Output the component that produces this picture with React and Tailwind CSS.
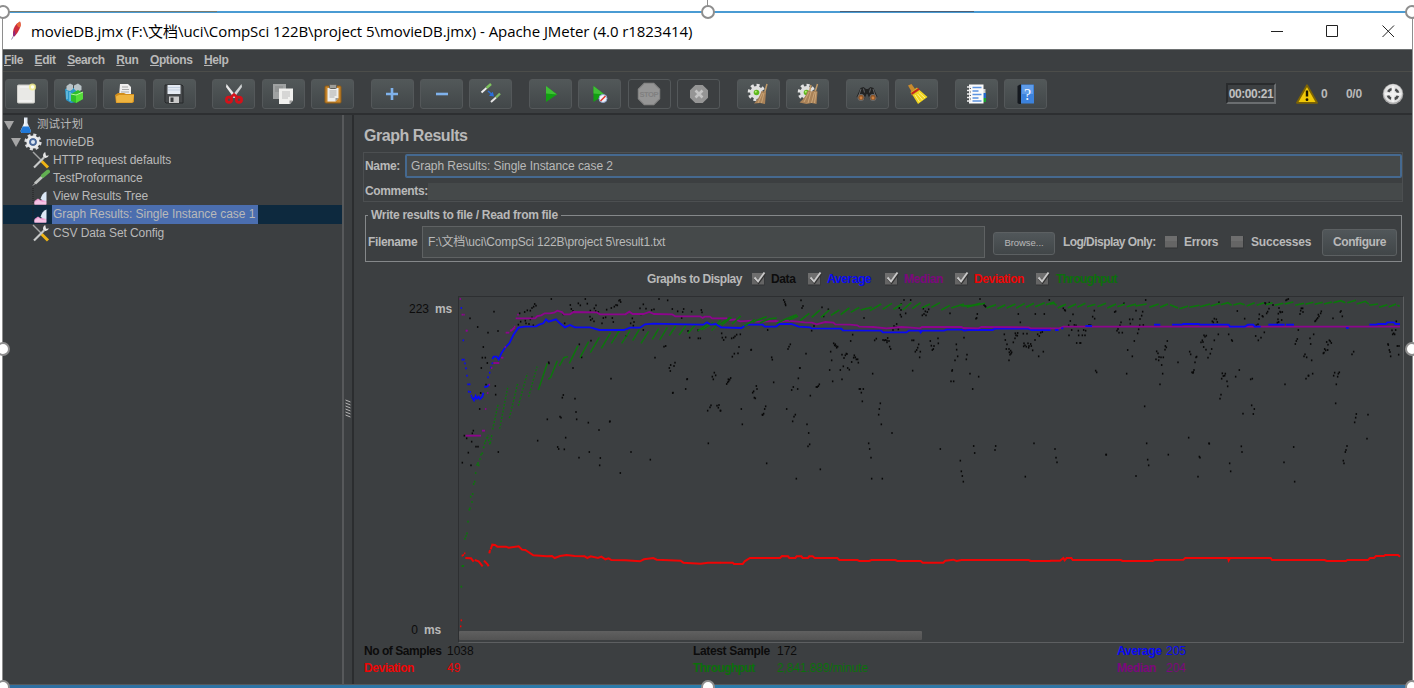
import React from "react";

/* ---------- icons ---------- */
const Svg = ({ children, s = 22 }) => (
  <svg width={s} height={s} viewBox="0 0 22 22" fill="none" className="shrink-0">
    {children}
  </svg>
);

const NewIcon = () => (
  <Svg>
    <rect x="2.500" y="2" width="17" height="18" rx="1" fill="#e9e9e6" stroke="#cfcfcb" />
    <path d="M5 4h10M4 18h13" stroke="#fafafa" />
    <circle cx="17.500" cy="4" r="3.600" fill="#f3ee8a" opacity=".8" />
    <circle cx="17.500" cy="4" r="1.700" fill="#fffff0" />
  </Svg>
);
const TemplatesIcon = () => (
  <Svg>
    <path d="M1 6l6-2 5 2v13l-5 1-5-3z" fill="#2b97c8" />
    <path d="M2.500 7l0-4 3.500-2.500 3 1.500 0 4-3 2zM10 6V2.500l4-2 3.500 2.500v4l-4 2z" fill="#b9c4c8" />
    <path d="M3 8v8M6 9v9" stroke="#8fd6ee" />
    <path d="M7 11l7-4 5 3v6l-7 4-5-2z" fill="#2fbf2a" />
    <path d="M12 12l7-3v7l-7 4z" fill="#55dd3a" />
    <path d="M7 11l5 1 7-3" stroke="#b4f59a" />
  </Svg>
);
const OpenIcon = () => (
  <Svg>
    <path d="M6 1h8l3 3v9H5z" fill="#eeeeee" />
    <path d="M8 4h6M8 6.500h7M7 9h8" stroke="#a9a9a9" />
    <path d="M1 12l3-2h6l2 1h8v8l-2 1H2z" fill="#d28e1c" />
    <path d="M2 13.500l3-1.500h15l-1.500 7.500H2.500z" fill="#eeb440" />
  </Svg>
);
const SaveIcon = () => (
  <Svg>
    <path d="M2 2h17l1 1v17H3l-1-1z" fill="#45484a" stroke="#26282a" />
    <rect x="4.500" y="2" width="13" height="9" fill="#e4eaf2" />
    <path d="M5 4.500h12M5 7h12" stroke="#c3d0e0" />
    <rect x="6" y="13.500" width="10" height="6.500" fill="#c9c9c9" />
    <rect x="7.500" y="14.500" width="3" height="4.500" fill="#3a3d3f" />
  </Svg>
);
const CutIcon = () => (
  <Svg>
    <path d="M3.500 1l10 12.500-2.500 1.500L3 4z" fill="#e9e9e9" />
    <path d="M18.500 1L8.500 13.500l2.500 1.500L19 4z" fill="#d0d3d4" />
    <circle cx="6" cy="16.800" r="2.600" stroke="#d3121a" strokeWidth="2.800" />
    <circle cx="16" cy="16.800" r="2.600" stroke="#d3121a" strokeWidth="2.800" />
    <path d="M7.500 14.500l3.500-3 3.500 3" stroke="#d3121a" strokeWidth="2.600" />
  </Svg>
);
const CopyIcon = () => (
  <Svg>
    <rect x="1" y="1" width="13" height="15" fill="#9fa2a2" />
    <path d="M3 4h8M3 6h8M3 8h5" stroke="#858888" />
    <path d="M7 5.500h14v12l-3 3.500H7z" fill="#f0f0ee" />
    <path d="M10 9h8M10 11h8M10 13h8M10 15h6" stroke="#bcbcbc" />
    <path d="M21 17.500h-3.500V21z" fill="#9a9a9a" />
  </Svg>
);
const PasteIcon = () => (
  <Svg>
    <rect x="3" y="3" width="16" height="17" rx="1" fill="#c8862b" stroke="#8f5c17" />
    <path d="M5.500 5h11v10l-3 3.500h-8z" fill="#eeeeec" />
    <path d="M7.500 8h7M7.500 10h7M7.500 12h7M7.500 14h5" stroke="#ababab" />
    <path d="M16.500 15h-3v3.500z" fill="#999" />
    <rect x="7.500" y="1.500" width="7" height="4" rx="1" fill="#9d9d98" stroke="#5f5f5b" />
  </Svg>
);
const PlusIcon = () => (
  <Svg>
    <path d="M11 5v12M5 11h12" stroke="#7fb2ec" strokeWidth="2.600" />
  </Svg>
);
const MinusIcon = () => (
  <Svg>
    <path d="M5 11h12" stroke="#7fb2ec" strokeWidth="2.600" />
  </Svg>
);
const ToggleIcon = () => (
  <Svg>
    <path d="M1.500 9.500L6.500 5" stroke="#eeeeee" strokeWidth="2" />
    <path d="M6.500 5L11 1" stroke="#7fc45f" strokeWidth="2.400" />
    <path d="M11 19l5-4.500" stroke="#e4e4e4" strokeWidth="2" />
    <path d="M16 14.500l4-4" stroke="#7fb765" strokeWidth="2.400" />
    <path d="M8 8l4 3.500" stroke="#2a6fd6" strokeWidth="1.600" />
    <path d="M14 13.500l-5-.8 3.800-3.900z" fill="#2a6fe0" />
  </Svg>
);
const StartIcon = () => (
  <Svg>
    <path d="M6 3l11 8.500L6 19z" fill="#12a012" />
    <path d="M6 3l11 8.500-11-1z" fill="#3fbf35" />
  </Svg>
);
const StartNoPauseIcon = () => (
  <Svg>
    <path d="M4.500 3l11 8.500-11 7.500z" fill="#12a012" />
    <path d="M4.500 3l11 8.500-11-1z" fill="#3fbf35" />
    <circle cx="14" cy="15.500" r="4" fill="#f2f4fa" stroke="#8fa5cf" />
    <path d="M11.500 18l5-5" stroke="#de3a2e" strokeWidth="1.600" />
  </Svg>
);
const StopIcon = () => (
  <Svg s={24}>
    <path d="M6.600 1.300h8.800l5.400 5.400v8.600l-5.400 5.400H6.600l-5.400-5.400V6.700z" fill="#959595" stroke="#868686" />
    <text x="10.800" y="13.700" textAnchor="middle" fontSize="7" fontWeight="bold" letterSpacing="-.5" fill="#808080" fontFamily="Liberation Sans, sans-serif">
      STOP
    </text>
  </Svg>
);
const ShutdownIcon = () => (
  <Svg>
    <path d="M7.300 2h7.400L20 7.300v7.400L14.700 20H7.300L2 14.700V7.300z" fill="#959595" />
    <path d="M7.500 7.500l7 7M14.500 7.500l-7 7" stroke="#c4c4c4" strokeWidth="2.600" />
  </Svg>
);
const Cog = () => (
  <>
    <circle cx="9.500" cy="9.500" r="7.300" stroke="#e3e3e3" strokeWidth="3" strokeDasharray="3 2.700" />
    <circle cx="9.500" cy="9.500" r="6.400" fill="#dedede" />
    <circle cx="9.500" cy="9.500" r="2.800" fill="#5fb81f" />
    <circle cx="8.800" cy="8.800" r="1" fill="#b8ee7a" />
  </>
);
const ClearIcon = () => (
  <Svg>
    <Cog />
    <path d="M20 1l-2.500 9" stroke="#c19a67" strokeWidth="1.500" />
    <path d="M14.500 8l4.500 1-1 12-5-1-6 .5q5-5 7.500-12.500z" fill="#a98258" />
    <path d="M15.500 10L11 20M17 10l-2.500 10" stroke="#d0ab7c" strokeWidth=".8" />
  </Svg>
);
const ClearAllIcon = () => (
  <Svg>
    <Cog />
    <path d="M14 2l-1.500 7M20.500 1L18 9" stroke="#c19a67" strokeWidth="1.500" />
    <path d="M10.500 7.500l4 1 3-1 3 1-1 12.500-5-1-5 1-7-1.500q6-5 8-11z" fill="#a98258" />
    <path d="M12 9L7 19M14 9l-3 11M17.500 9l-3 11M19 9l-1.500 11" stroke="#d4b083" strokeWidth=".8" />
  </Svg>
);
const FindIcon = () => (
  <Svg>
    <path d="M4.500 5l3-1 2.500 2h2l2.500-2 3 1 4 9-4 3-4-1-2-5h-1l-2 5-4 1-4-3z" fill="#222323" />
    <path d="M5 6l-2 6M17 6l2 6M7.500 5.500l1 4M14.500 5.500l-1 4" stroke="#606366" />
    <circle cx="5" cy="14.500" r="3.200" fill="#8e5528" stroke="#66696b" />
    <circle cx="17" cy="14.500" r="3.200" fill="#8e5528" stroke="#66696b" />
    <circle cx="5" cy="15" r="1.400" fill="#cc8242" />
    <circle cx="17" cy="15" r="1.400" fill="#cc8242" />
  </Svg>
);
const BroomIcon = () => (
  <Svg>
    <path d="M2 2.500L5.500 1l3.500 5-3.500 2.500z" fill="#c98b2d" />
    <path d="M4.500 9l6.500-4.500 2.500 2.700L6 12.500z" fill="#dfb021" />
    <path d="M6.500 12l7-5 8 7-9.500 7z" fill="#f0d51f" />
    <path d="M5.500 10.800l7.500-5" stroke="#c4281c" strokeWidth="2" />
    <path d="M9 12l4.500 7M11.500 11l5 6M13 9.500l6 5.500" stroke="#fff08a" />
  </Svg>
);
const FunctionIcon = () => (
  <Svg>
    <path d="M17 6h3.500v4H17z" fill="#cfcfcf" />
    <path d="M17 10h4v5h-4z" fill="#2468c8" />
    <path d="M17 15h4v4h-4z" fill="#18a030" />
    <rect x="4" y="1.500" width="14.500" height="19" fill="#fbfbfb" />
    <path d="M7.500 4.500h9M7.500 8h6M7.500 11.500h9M7.500 15h6M7.500 18h9" stroke="#5b93e0" strokeWidth="1.700" />
    <path d="M2 4h4M2 7.500h4M2 11h4M2 14.500h4M2 18h4" stroke="#ececec" strokeWidth="1.400" />
    <path d="M4.800 5.500h1M4.800 9h1M4.800 12.500h1M4.800 16h1" stroke="#444" />
  </Svg>
);
const HelpIcon = () => (
  <Svg>
    <path d="M2.500 3L5 1.500h1V21H4l-1.500-1z" fill="#15191f" />
    <rect x="6" y="1.500" width="13" height="19" rx=".6" fill="#3c82dc" />
    <rect x="7" y="2" width="11" height="9" fill="#5f9ce8" />
    <text x="12.600" y="16.600" textAnchor="middle" fontSize="16" fill="#f3f8ff" fontFamily="Liberation Serif, serif">
      ?
    </text>
  </Svg>
);
const WarningIcon = () => (
  <svg width="22" height="20" viewBox="0 0 22 20">
    <path d="M11 1.200L21 18.800H1z" fill="#f0c808" stroke="#7d6404" strokeWidth="1.800" strokeLinejoin="round" />
    <path d="M11 6.500v6" stroke="#1b1600" strokeWidth="2.400" />
    <circle cx="11" cy="15.700" r="1.400" fill="#1b1600" />
  </svg>
);
const StatusIcon = () => (
  <svg width="22" height="22" viewBox="0 0 22 22" fill="none">
    <circle cx="11" cy="11" r="10.300" fill="#a9a9a9" />
    <circle cx="11" cy="10.500" r="9.200" fill="#e2e2e2" />
    <circle cx="11" cy="11" r="5.200" stroke="#4a4c4d" strokeWidth="2.600" strokeDasharray="4.600 3.560" strokeDashoffset="-1.800" />
    <path d="M11 3v16M3 11h16" stroke="#f2f2f2" strokeWidth="2.600" />
  </svg>
);
const FeatherIcon = () => (
  <svg width="14" height="22" viewBox="0 0 14 22">
    <path d="M3 15.500Q2.500 8 6.500 4L10 1.500q1.500 3-.5 7.500-2 4.500-5 7.500z" fill="#cc2c3c" />
    <path d="M6.500 4L10 1.500q1.500 3 .1 6Q8 8 6.500 4z" fill="#e8683a" />
    <path d="M3 15.500q0-3.500 1.500-5.500l1 4.500-1.500 2z" fill="#8c2a86" />
    <path d="M1.500 19.500l2-3.500" stroke="#8f80ac" strokeWidth=".9" />
  </svg>
);
const FlaskIcon = () => (
  <svg width="12" height="18" viewBox="0 0 12 18">
    <path d="M4 1.500h3.500V7l3.500 8-1 2H1.500l-1-2L4 7z" fill="#dfe8f2" />
    <path d="M2.700 10.500h6.200l2.100 4.500-1 2H1.500l-1-2z" fill="#1f78d8" />
    <path d="M4.800 3v7" stroke="#fff" />
  </svg>
);
const GearIcon = () => (
  <svg width="18" height="18" viewBox="0 0 18 18" fill="none">
    <circle cx="9" cy="9" r="7" stroke="#dcdde0" strokeWidth="3.200" strokeDasharray="2.900 2.600" />
    <circle cx="9" cy="9" r="5" stroke="#e9eaec" strokeWidth="3.200" />
    <circle cx="9" cy="9" r="3.800" fill="#47679c" />
    <circle cx="9" cy="9" r="2" fill="#dbe6f4" />
  </svg>
);
const ToolsIcon = () => (
  <svg width="18" height="18" viewBox="0 0 18 18" fill="none">
    <path d="M1 1l8 8" stroke="#a4a6a6" strokeWidth="1.500" />
    <path d="M9.500 10l6.500 6.500" stroke="#eeb414" strokeWidth="3" />
    <path d="M2 16.500l10-10" stroke="#c7c9c9" strokeWidth="2.200" />
    <path d="M13.200 1Q10 3 11.500 6.500q3.500 1.500 5.500-2l-3 .2z" fill="#e6e6e6" />
  </svg>
);
const PipetteIcon = () => (
  <svg width="18" height="18" viewBox="0 0 18 18" fill="none">
    <path d="M1 16.500l3-3" stroke="#cdcdcd" strokeWidth="1" />
    <path d="M3 14.500L11 7" stroke="#c2c5c3" strokeWidth="2.800" />
    <path d="M11 6.800L16 2.500" stroke="#62b052" strokeWidth="4" strokeLinecap="round" />
  </svg>
);
const ChartIcon = () => (
  <svg width="18" height="18" viewBox="0 0 18 18" fill="none">
    <path d="M1 1v16" stroke="#222" strokeDasharray="1 1" />
    <path d="M2.500 17.500V14l3.500-2.500 3 2L14 9v8.500z" fill="#ee9bd0" />
    <path d="M8.500 12q1.500-6 6-7.500V14q-3 0-6-2z" fill="#dce8f6" />
    <path d="M2.500 15l4-2 4 2 4-1v3.500h-12z" fill="#f5c3e4" />
  </svg>
);

/* ---------- toolbar ---------- */
const toolbarGroups = [
  [NewIcon, TemplatesIcon, OpenIcon, SaveIcon],
  [CutIcon, CopyIcon, PasteIcon],
  [PlusIcon, MinusIcon, ToggleIcon],
  [StartIcon, StartNoPauseIcon, StopIcon, ShutdownIcon],
  [ClearIcon, ClearAllIcon],
  [FindIcon, BroomIcon],
  [FunctionIcon, HelpIcon],
];
const disabledIcons = [StopIcon, ShutdownIcon];

const Toolbar = () => (
  <div className="flex h-[40px] items-center pt-[1px] pr-[8px] pl-[1.500px]">
    <div className="flex gap-[16.600px]">
      {toolbarGroups.map((group, i) => (
        <div key={i} className="flex gap-[6.400px]">
          {group.map((Icon, j) => (
            <button
              key={j}
              className={
                "flex h-[30px] w-[43px] items-center justify-center rounded-[3px] border border-[#54585a] " +
                (disabledIcons.includes(Icon) ? "bg-[#3c3f41]" : "bg-linear-to-b from-[#525859] to-[#424749]")
              }
            >
              <Icon />
            </button>
          ))}
        </div>
      ))}
    </div>
    <div className="ml-auto flex items-center">
      <span className="flex h-[21px] w-[50px] items-center justify-center border-2 border-t-[#292b2d] border-r-[#6b6e70] border-b-[#6b6e70] border-l-[#292b2d] text-[12px] font-bold tracking-[-0.450px] text-[#c0c0c0]">
        00:00:21
      </span>
      <span className="ml-[20px] flex">
        <WarningIcon />
      </span>
      <span className="ml-[3px] w-[7px] text-[12px] font-bold">0</span>
      <span className="ml-[18px] w-[18px] text-[12px] font-bold tracking-[-0.300px]">0/0</span>
      <span className="ml-[18px] flex">
        <StatusIcon />
      </span>
    </div>
  </div>
);

/* ---------- tree ---------- */
const treeItems = [
  { label: "HTTP request defaults", icon: ToolsIcon },
  { label: "TestProformance", icon: PipetteIcon },
  { label: "View Results Tree", icon: ChartIcon },
  { label: "Graph Results: Single Instance case 1", icon: ChartIcon, selected: true },
  { label: "CSV Data Set Config", icon: ToolsIcon },
];
const Arrow = () => (
  <svg width="10" height="9" viewBox="0 0 10 9">
    <path d="M0 0h10L5 9z" fill="#a6a6a6" />
  </svg>
);

const Tree = () => (
  <div className="w-[341px] border-r-2 border-r-[#57595b] text-[12px] tracking-[-0.080px]">
    <div className="flex h-[18px] items-center pt-[2px] pl-[1px]">
      <Arrow />
      <span className="ml-[6px]">
        <FlaskIcon />
      </span>
      <span className="ml-[5px] text-[11.500px] tracking-normal">测试计划</span>
    </div>
    <div className="flex h-[18px] items-center pl-[8px]">
      <Arrow />
      <span className="ml-[3px]">
        <GearIcon />
      </span>
      <span className="ml-[4px]">movieDB</span>
    </div>
    {treeItems.map(({ label, icon: Icon, selected }) => (
      <div key={label} className={"flex h-[18.150px] items-center pl-[29px] " + (selected ? "bg-[#0d293e]" : "")}>
        <Icon />
        <span className={"ml-[2px] flex h-full items-center pl-[1px] whitespace-nowrap " + (selected ? "w-[206px] bg-[#4b6eaf] tracking-[-0.050px]" : "")}>
          {label}
        </span>
      </div>
    ))}
  </div>
);

/* ---------- controls ---------- */
const Check = ({ on }) => (
  <svg width="17" height="16" viewBox="0 0 17 16" fill="none" className="shrink-0">
    <rect x="1" y="2" width="12.500" height="12.500" fill="#303234" />
    <rect x="1" y="2" width="12" height="11.500" fill="#656565" />
    <rect x="1" y="2" width="12" height="5" fill="#6e6e6e" />
    {on && (
      <>
        <path d="M4 7.500l3.500 4L14 2.500" stroke="#333" strokeWidth="2.600" />
        <path d="M3.500 6.500l3.500 4L13.500 1.500" stroke="#c8c8c8" strokeWidth="1.900" />
      </>
    )}
  </svg>
);

/* ---------- chart data, stored at three units per pixel ---------- */
const parse = (s) => s.trim().split(/\s+/).map((p) => p.split(",").map(Number));

const dotsA = parse(`454,27 556,27 777,27 803,31 404,42 408,47 401,50 396,54 391,62 374,66 382,61 282,65 210,85 233,111 264,128 294,123 250,171 247,203 256,203 244,234 262,219 258,284 286,288 242,309 239,357 287,314 193,437 220,422 217,430 200,445 215,455 228,470 234,470 205,488 187,518 213,526 295,486
511,45 535,40 541,46 514,57 519,63 562,41 571,62 583,55 588,46 587,63 595,66 620,59 634,54 643,50 648,45 652,46 657,32 662,36 660,30 730,43 720,55 723,73 738,56 755,60 762,58 817,57 833,64 851,57 848,66 845,84 875,65 904,60 906,67 490,73 355,104 362,95 376,92 378,100 387,102 391,88 396,82 400,106 359,70 494,100 570,80 572,90 577,86 582,94 606,100 610,84 617,82 637,84 640,96 692,100 697,85 702,96 700,107 679,138 730,120
765,203 792,170 797,168 825,218 822,228 812,225 808,234 811,243 861,268 862,267 857,297 818,309 819,308 633,266 519,234 446,217 447,220 538,163 545,202 573,152 490,315 487,323 525,326 528,366 530,388 442,388 480,380 483,383 413,452 497,443 565,398 597,420 629,395 630,394 473,471 476,477 493,478 568,486 537,503 601,504 599,526 661,549 693,486 751,509 925,460 943,248 947,256 937,260 940,268 933,346 930,352 923,362 951,347 957,345 955,353 962,362 894,121 895,145 901,145 869,143 864,123`);

const dotsB = parse(`191,30 194,36 196,42 197,46 243,31 249,48 246,54 306,52 325,58 311,79 432,84 544,42 552,30 572,30 538,54 543,60 541,74 557,70 544,80 610,56 616,64 622,66 612,72 618,76 607,76 626,58 690,70 780,27 795,48 797,50 792,45 772,72 768,86 770,84 895,72 901,97 946,72 973,72 988,30 530,102 528,112 519,120 522,108 535,118 282,108 275,122 143,120
7,143 11,150 17,142 5,130 35,145 41,143 45,139 50,134 61,133 57,171 54,190 43,191 37,200 93,180 94,179 211,163 207,170 204,177 155,202 157,209 258,191 239,234 240,234 235,265 233,297 220,291 215,300 271,317 298,283 295,288 292,291 289,291 332,185 335,211 329,240 338,274 341,160 344,166 348,168 350,173 346,163 353,170 392,153 398,134 366,194 379,191 376,196 372,204 381,192 403,196 406,202 401,203 409,208 395,216 415,218 413,208 370,229 361,240 383,234 388,239 366,268 458,251
418,297 421,297 430,297 424,308 427,334 481,340 478,357 476,374 484,403 516,429 446,460 449,477 453,503 455,566 487,566 464,151 469,146 489,150 493,151 497,150 501,152 503,144 507,153 501,157 509,170 512,177 576,151 581,151 596,163 593,173 590,180 586,185 601,185 599,202 578,242 631,153 634,167 642,168 640,177 637,180 654,145 655,160 732,143 709,163 710,179 713,199 705,211 741,194 739,208 697,240 696,243 693,274 701,274 750,251 776,260 758,297
661,477 761,468 764,489 721,512 724,544 727,558 730,575 827,468 825,480 942,460 916,560 853,133 856,150 861,163 859,177 867,177 872,182 868,187 873,191 875,187 870,194 867,211 880,157 885,145 888,136 893,129 886,130 892,137 910,131 921,131 912,160 915,166 919,170 924,160 927,168 932,162 934,168 926,173 938,181 911,169 953,133 958,138 962,128 967,126 945,150 970,185 956,199
25,268 32,264 29,269 26,274 23,277 20,282 109,288 111,297 101,304 98,308 103,323 106,325 161,277 137,349 134,357 131,371 127,374 128,375 64,357 67,403 1,362 200,357 226,374 222,380 218,394 261,403 266,429 269,463 264,469 140,520 301,538 229,566`);

const dotsC = parse(`40,55 44,60 46,62 69,73 61,93 56,106 73,105 78,106 65,120 57,136 85,122 101,120 107,122 97,136 105,136 86,136 80,159 90,159 92,159 133,62 128,80 134,86 117,105 122,106 197,64 194,66 222,40 221,42 287,30 278,65 275,77 270,87 280,105 269,106 266,118 263,130 253,153 258,62 248,88 239,88 241,101 213,97 210,106 204,117 201,122 207,128 217,128 233,180 247,199 230,251 137,242 140,247
352,153 346,168 349,172 345,179 320,184 324,190 327,201 333,202 340,202 318,208 326,211 335,225 338,251 330,283 384,217 419,185 422,193 440,200 438,202 435,217 432,240 426,247 429,249 430,246 457,151 462,136 465,140 469,137 459,156 453,157 461,171 468,179 485,177 481,191 474,203 493,151 505,133 507,37 499,88 493,86 487,94 490,97 502,96 536,133 545,150 547,153 568,240 557,260 517,250 526,251 524,257 520,258 515,266 531,274 533,289 602,268 607,266 513,314 510,326 605,346 613,357 579,371 610,372
584,86 562,63 645,39 647,41 669,45 658,38 657,56 653,65 650,70 637,78 639,80 628,73 627,87 624,103 619,106 643,127 633,143 625,151 617,138 715,27 711,29 708,31 687,54 690,65 692,67 697,66 685,71 684,88 695,90 686,96 682,98 754,55 758,55 752,62 759,66 750,72 814,64 812,70 805,74 807,79 803,84 800,88 797,92 795,94 873,63 871,66 877,79 849,85 745,120 742,147 739,153 736,162 780,145 791,133 782,162 765,193 762,199 770,202 785,211 775,257 776,257 788,251 768,266 705,283 838,151 841,154 830,156 844,159 834,164 824,177 827,181 833,180 822,188 820,190 911,185 906,193 854,248 868,247 865,251 851,257 863,260 859,283 857,340
1026,121 1037,120 1031,130 1034,133 1028,133 1014,162 1015,165 1047,168 1042,168 1018,180 1020,186 1046,194 1022,199 1039,94 284,349 416,443 290,460 293,509 296,526 258,558 355,494 168,494 169,494 477,460 478,461 448,500 450,503 444,560 574,469 576,486 539,520 542,544 731,471 702,517 734,575 891,468 888,480 886,486 880,512 882,520 919,372 917,383 914,397 954,374 951,446 15,477 18,503 21,517`);

const greenDots = parse(`184,890 187,828 190,828 195,746 198,738 201,730 204,695 208,659 210,655 212,620 216,636 218,612 221,582 224,575 227,549 231,524 234,519 236,526 240,507 243,494 247,490 251,472 254,460`);
const greenDashed = ["256,455 265,434", "262,440 271,466", "271,460 276,432", "278,418 295,340", "299,416 324,288", "328,384 353,281", "355,347 382,250", "386,320 411,230"];
const greenA = ["415,300 442,220", "445,268 452,262 472,212", "478,228 492,203 504,200", "508,220 534,167", "540,203 566,155", "571,188 598,142", "604,175 632,128", "634,160 658,122", "665,160 690,122", "698,152 718,118", "723,160 746,124", "757,148 776,116", "779,150 802,112", "808,137 827,108", "837,135 858,106", "864,130 888,102", "893,123 920,104", "905,120 940,98", "935,122 962,90", "950,108 990,82"];
const greenB = ["5,105 34,82", "36,102 62,78", "73,108 104,88", "98,96 140,80", "120,98 150,86 170,84", "170,100 196,88 230,74", "206,90 234,78", "240,92 268,70", "275,82 300,60", "303,82 328,60", "333,76 358,60", "362,74 388,54", "392,67 418,52", "422,60 455,52", "450,62 484,42", "488,58 516,40", "520,58 546,42", "548,60 574,38", "577,56 602,38", "605,54 630,42", "634,52 660,38", "664,60 690,46", "694,54 732,42", "724,48 764,46", "740,52 780,40", "766,46 795,40", "800,54 828,44", "832,56 856,44", "860,54 886,42", "889,54 914,40", "918,52 942,40", "946,50 974,38", "978,44 1003,36"];
const greenC = ["0,43 12,40 20,46", "23,54 48,43", "53,54 78,42", "82,52 106,40", "111,50 136,43", "142,50 168,40", "172,54 198,42", "202,50 225,42", "230,50 258,42", "256,48 290,42", "298,52 326,42", "330,52 354,42", "360,44 384,54", "388,56 408,50 414,48", "418,52 448,46", "450,50 480,42", "482,48 510,40", "512,44 534,38 545,46", "550,45 570,40 584,44", "590,48 614,38", "620,46 642,38", "648,44 668,38", "674,46 700,40", "704,42 730,36", "736,46 762,40", "766,43 790,37", "794,43 818,37", "822,42 846,36", "850,38 872,32 886,38", "892,38 918,31", "920,42 946,34 956,42", "958,46 984,42", "987,52 1012,44", "1016,51 1038,42", "1042,46 1049,49"];

const blueDots = parse(`184,54 190,151 187,209 192,209 195,220 198,235 201,257 204,283 209,283 206,305 211,306 214,317 264,262 269,248 273,232 277,220`);
const blueA = ["215,320 222,331 227,318 231,326 236,320 240,327 247,320 250,308", "253,291 262,289 267,284", "277,207 281,200 290,200 296,208 304,190 316,172 328,160 340,135 355,113 373,110 408,109 417,104 430,100 438,88 446,95 468,88 480,100 495,112 510,105 525,112 570,112 598,120 672,120 690,113 720,113 735,103 760,101 858,103 910,104 921,97 932,104 947,102 960,110 962,111"];
const blueB = ["0,112 64,114 80,104 128,104 134,110 168,110 178,102 214,102 236,110 270,112 274,115 364,116 368,121 484,122 488,127 560,127 566,122 600,122 602,127 606,122 672,122 680,119 726,119 732,122 746,120 818,120 824,116 926,116 934,120 992,120", "1006,120 1016,120"];
const blueC = ["15,120 24,120", "34,115 40,115", "106,108 126,108", "312,104 331,104", "366,104 396,104 400,102 446,102 450,104 536,104 540,110 584,110 594,104 610,104 614,110 632,110", "655,104 704,104", "708,104 732,104", "888,114 896,114", "958,104 980,104 984,102 1008,102 1012,97 1032,97 1036,102 1050,102"];

const purpleDots = parse(`181,27 187,74 192,74 199,122 201,122 257,357 263,309 268,284 275,234 284,219 294,219 308,203 305,203 316,171 344,110 354,74 333,122`);
const purpleA = ["197,437 243,437", "246,422 255,422", "280,219 298,219", "317,128 328,128", "331,122 336,120 344,112", "347,85 405,85 412,78 424,76 434,70 450,70 462,68 472,62 486,66 492,73 510,73 520,66 590,67 600,73 676,73 688,65 698,72 730,72 748,66 762,72 816,73 826,79 900,79 908,84 914,80 930,80 936,85 960,85"];
const purpleB = ["0,85 22,85", "28,90 46,88 60,94 96,92 108,95 168,93 178,96 196,92 232,95 254,97 276,98 290,103 316,96 340,98 346,103 390,104 412,106 418,110 460,111 500,115 544,111 566,112 600,115 606,111 724,111 730,114 776,115 784,111 926,112 932,115 992,115"];
const purpleC = ["0,115 28,115 40,110 1050,110"];

const redDots = parse(`187,797 190,795 194,790 184,991 182,1009`);
const redA = ["196,804 213,805 221,815", "224,810 236,814 248,829", "252,812 262,822 266,829", "268,790 270,780", "272,778 277,764 285,765 292,770 318,770 326,773 356,769 366,779 376,780 400,796 440,799 456,798 464,804 480,798 500,795 524,798 554,799 562,804 572,799 594,804 604,800 616,808 626,805 634,810 676,811 720,814 732,808 760,804 770,809 790,810 842,812 850,818 902,821 924,818 962,818"];
const redB = ["0,818 38,818 42,822 68,822 74,814 90,804 180,804 186,798 204,799 208,804 226,804 230,799 244,799 248,804 264,804 268,799 278,799 284,804 352,804 358,810 412,810 418,813 448,813 454,810 526,810 532,813 602,813 608,818 670,818 676,812 700,809 710,813 724,810 926,810 932,813 992,813"];
const redC = ["0,812 30,812 40,804 44,811 50,804 64,804 68,810 212,810 218,813 308,813 314,810 400,809 406,804 534,804 536,811 540,804 662,804 666,810 824,810 830,813 888,813 892,810 954,810 960,804 972,804 978,798 1002,798 1006,795 1044,795 1050,800"];

const Dots = ({ pts, color, size = 4.4 }) =>
  pts.map(([x, y], i) => <rect key={i} x={x - size / 2} y={y - size / 2 - 0.5} width={size} height={size + 1} fill={color} />);
const Lines = ({ segs, color, w = 5.5, dash }) =>
  segs.map((s, i) => <polyline key={i} points={s} fill="none" stroke={color} strokeWidth={w} strokeDasharray={dash} />);

const BLUE = "#0a0af5";
const PURPLE = "#8d058d";
const GREEN = "#0b780b";
const RED = "#ee0505";

const Chart = () => (
  <svg width="944" height="334" viewBox="459 297 944 334" className="block">
    <g transform="translate(400 290) scale(.33333)">
      <Dots pts={dotsA} color="#080808" />
      <Lines segs={greenDashed} color={GREEN} w={4} dash="5 5" />
      <Lines segs={greenA} color={GREEN} w={4.2} />
      <Dots pts={greenDots} color={GREEN} />
      <Lines segs={blueA} color={BLUE} />
      <Dots pts={blueDots} color={BLUE} />
      <Lines segs={purpleA} color={PURPLE} />
      <Dots pts={purpleDots} color={PURPLE} />
      <Lines segs={redA} color={RED} w={6} />
      <Dots pts={redDots} color={RED} />
    </g>
    <g transform="translate(720 290) scale(.33333)">
      <Dots pts={dotsB} color="#080808" />
      <Lines segs={blueB} color={BLUE} />
      <Lines segs={purpleB} color={PURPLE} />
      <Lines segs={greenB} color={GREEN} w={4.8} />
      <Lines segs={redB} color={RED} w={6} />
    </g>
    <g transform="translate(1050 290) scale(.33333)">
      <Dots pts={dotsC} color="#080808" />
      <Lines segs={purpleC} color={PURPLE} />
      <Lines segs={blueC} color={BLUE} />
      <Lines segs={greenC} color={GREEN} w={4.8} />
      <Lines segs={redC} color={RED} w={6} />
    </g>
  </svg>
);

/* ---------- result panel ---------- */
const GraphPanel = () => (
  <div className="flex w-[1059px] flex-col border-l-2 border-l-[#2b2d2f] pl-[10px] text-[12px]">
    <h1 className="mt-[11px] h-[20px] text-[16px] leading-[20px] font-bold tracking-[-0.450px]">Graph Results</h1>

    <div className="mt-[6px] -ml-[1px] h-[50px] w-[1040px] border border-[#4c4f51] pl-[1px]">
      <div className="mt-px flex h-[23px] items-center">
        <b className="w-[40px] tracking-[-0.350px]">Name:</b>
        <div className="flex h-[24px] flex-1 items-center rounded-[2px] border-2 border-[#456990] bg-[#45494a] pl-[4px] tracking-[-0.060px]">
          Graph Results: Single Instance case 2
        </div>
      </div>
      <div className="mt-[5px] flex h-[18px] items-center">
        <b className="w-[63px] tracking-[-0.350px]">Comments:</b>
        <div className="h-[17px] flex-1 bg-[#45494a]" />
      </div>
    </div>

    <fieldset className="mt-[5px] ml-[1px] h-[55px] w-[1037px] border-[1.500px] border-[#85888a]">
      <legend className="ml-[2px] h-[16px] px-[3px] leading-[16px] font-bold tracking-[-0.290px] whitespace-nowrap">Write results to file / Read from file</legend>
      <div className="flex h-[38px] items-center pl-[2px]">
        <b className="w-[54px] tracking-[-0.350px]">Filename</b>
        <div className="flex h-[32px] w-[563px] items-center border border-[#5f6263] bg-[#45494a] pl-[5px] tracking-[-0.170px]">
          F:\文档\uci\CompSci 122B\project 5\result1.txt
        </div>
        <button className="mt-[2px] ml-[8px] flex h-[23px] w-[62px] items-center justify-center rounded-[3px] border border-[#5c6062] bg-linear-to-b from-[#51575a] to-[#414648] text-[9.500px] tracking-[-0.050px]">
          Browse...
        </button>
        <b className="ml-[8px] w-[101px] tracking-[-0.550px] whitespace-nowrap">Log/Display Only:</b>
        <Check />
        <b className="ml-[3px] w-[46px] tracking-[-0.300px]">Errors</b>
        <Check />
        <b className="ml-[4px] w-[71px] tracking-[-0.200px]">Successes</b>
        <button className="flex h-[27px] w-[75px] items-center justify-center rounded-[3px] border border-[#5c6062] bg-linear-to-b from-[#51575a] to-[#414648] font-bold tracking-[-0.400px]">
          Configure
        </button>
      </div>
    </fieldset>

    <div className="mt-[8px] flex h-[18px] items-center pl-[283px] font-bold tracking-[-0.400px]">
      <span className="w-[104px] tracking-[-0.450px]">Graphs to Display</span>
      <Check on />
      <span className="ml-[3px] w-[36px] text-[#0c0c0c]">Data</span>
      <Check on />
      <span className="ml-[3px] w-[57px] text-[#0a0af5]">Average</span>
      <Check on />
      <span className="ml-[3px] w-[50px] text-[#7d087d]">Median</span>
      <Check on />
      <span className="ml-[3px] w-[61px] tracking-[-0.450px] text-[#ee0505]">Deviation</span>
      <Check on />
      <span className="ml-[4px] tracking-[-0.650px] text-[#0b700b]">Throughput</span>
    </div>

    <div className="mt-[8px] flex h-[347px]">
      <div className="flex w-[94px] flex-col justify-between pt-[5px] pb-[5px] font-bold">
        <div className="flex justify-end gap-[6px] pr-[6px] leading-[16px] tracking-[-0.200px]">
          <span className="font-normal tracking-normal text-[#0c0c0c]">223</span>ms
        </div>
        <div className="flex justify-end gap-[6px] pr-[17px] leading-[16px] tracking-[-0.200px]">
          <span className="font-normal tracking-normal text-[#0c0c0c]">0</span>ms
        </div>
      </div>
      <div className="w-[946px] border border-t-[#2d2f31] border-r-[#5d5f61] border-b-[#5d5f61] border-l-[#2d2f31]">
        <Chart />
        <div className="h-[9px] w-[463px] rounded-[1px] bg-linear-to-b from-[#606060] to-[#535353]" />
      </div>
    </div>

    <div className="grid grid-cols-[83px_246px_84px_340px_49px_60px] leading-[17px] whitespace-nowrap">
      <b className="tracking-[-0.450px] text-[#0c0c0c]">No of Samples</b>
      <span className="text-[#0c0c0c]">1038</span>
      <b className="tracking-[-0.350px] text-[#0c0c0c]">Latest Sample</b>
      <span className="text-[#0c0c0c]">172</span>
      <b className="tracking-[-0.350px] text-[#0a0af5]">Average</b>
      <span className="text-[#0a0af5]">205</span>
      <b className="tracking-[-0.450px] text-[#ee0505]">Deviation</b>
      <span className="text-[#ee0505]">49</span>
      <b className="tracking-[-0.550px] text-[#0b700b]">Throughput</b>
      <span className="tracking-[-0.100px] text-[#0b700b]">2,841.889/minute</span>
      <b className="tracking-[-0.400px] text-[#7d087d]">Median</b>
      <span className="text-[#7d087d]">204</span>
    </div>
  </div>
);

const menus = ["File", "Edit", "Search", "Run", "Options", "Help"];

const Handle = ({ at }) => <i className={"absolute size-[14px] rounded-full border-[2.500px] border-[#8e8e8e] bg-white " + at} />;

export default function App() {
  return (
    <div className="relative flex h-[688px] w-[1414px] flex-col overflow-hidden bg-white pt-[11px] font-['Liberation_Sans','Noto_Sans_CJK_SC',sans-serif] text-[#b9b9b9]">
      <div className="flex h-[2px] bg-[#4a9bd3]">
        <div className="ml-[4px] h-[1px] w-[213px] bg-[#777b70]" />
        <div className="ml-[623px] h-[1px] w-[134px] bg-[#4a6078]" />
      </div>
      <div className="mr-[1px] ml-[2px] flex h-[675px] flex-col border-x border-[#8e8e8e]">
        <header className="flex h-[36px] shrink-0 items-center bg-white pl-[7px] font-['Open_Sans','Noto_Sans_CJK_SC',sans-serif] text-[15px] whitespace-nowrap text-black">
          <FeatherIcon />
          <span className="ml-[7px] tracking-[-0.065px]">
            movieDB.jmx (F:\文档\uci\CompSci 122B\project 5\movieDB.jmx) - Apache JMeter (4.0 r1823414)
          </span>
          <svg width="126" height="16" viewBox="0 0 126 16" fill="none" stroke="#222" className="mr-[17px] mb-[1px] ml-auto">
            <path d="M2 8.500h12M57.500 2.500h11v11h-11zM113.500 2.500l11.500 11.500M125 2.500L113.500 14" />
          </svg>
        </header>
        <div className="flex flex-1 flex-col border-t border-t-[#6e7172] bg-[#3c3f41]">
          <nav className="flex h-[22px] items-center gap-[11.600px] border-b border-b-[#4c4d4a] pb-[2px] pl-[1px] text-[12px] font-bold">
            {menus.map((m) => (
              <span key={m} className="tracking-[-0.420px]">
                <u className="underline-offset-[1px]">{m[0]}</u>
                {m.slice(1)}
              </span>
            ))}
          </nav>
          <div className="h-[1px]" />
          <Toolbar />
          <div className="h-[2px] bg-[#2d2f31]" />
          <div className="flex h-[569px]">
            <Tree />
            <div className="flex w-[8px] items-center justify-center pt-[18px]">
              <svg width="6" height="20" viewBox="0 0 6 20" stroke="#b4b4b4" fill="none">
                <path d="M0 3l5 2M0 6l5 2M0 9l5 2M0 12l5 2M0 15l5 2M0 18l5 2" transform="translate(.5 -2)" />
              </svg>
            </div>
            <GraphPanel />
          </div>
          <div className="h-[1px] bg-[#55585a]" />
          <div className="h-[3px] bg-linear-to-r from-[#2f6ea0] via-[#2b7cab] to-[#356d9c]" />
        </div>
      </div>
      <div className="absolute top-0 left-[707px] h-[8px] w-px bg-[#8e8e8e]" />
      <Handle at="top-[5px] left-[-4px]" />
      <Handle at="top-[5px] left-[701px]" />
      <Handle at="top-[5px] left-[1405px]" />
      <Handle at="top-[342px] left-[-4px]" />
      <Handle at="top-[342px] left-[1405px]" />
      <Handle at="top-[680px] left-[-4px]" />
      <Handle at="top-[680px] left-[701px]" />
      <Handle at="top-[680px] left-[1405px]" />
    </div>
  );
}
